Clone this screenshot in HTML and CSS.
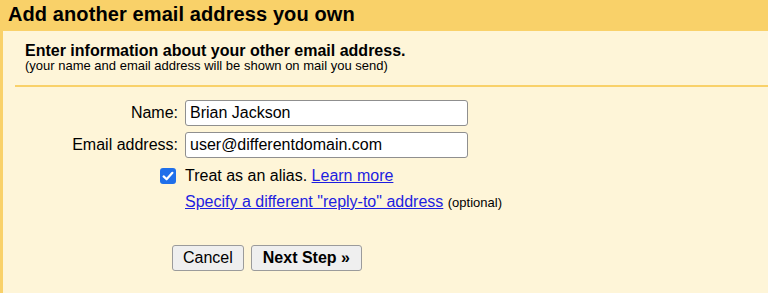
FILE: index.html
```html
<!DOCTYPE html>
<html>
<head>
<meta charset="utf-8">
<link rel="stylesheet" href="styles.css">
</head>
<body>
<div class="header">Add another email address you own</div>
<div class="panel">
  <div class="intro">
    <div class="intro-title">Enter information about your other email address.</div>
    <div class="intro-sub">(your name and email address will be shown on mail you send)</div>
  </div>
  <div class="divider"></div>
  <div class="form">
    <div class="row row-first">
      <label class="label">Name:</label>
      <input class="field" type="text" value="Brian Jackson">
    </div>
    <div class="row row-field">
      <label class="label">Email address:</label>
      <input class="field" type="text" value="user@differentdomain.com">
    </div>
    <div class="row row-check">
      <div class="label label-check">
        <span class="check">
          <svg width="16" height="16" viewBox="0 0 16 16"><rect x="0" y="0" width="16" height="16" rx="3" fill="#1f6fea"/><path d="M3.6 8.4 L6.6 11.3 L12.4 4.8" fill="none" stroke="#fff" stroke-width="2.2" stroke-linecap="round" stroke-linejoin="round"/></svg>
        </span>
      </div>
      <div class="text">Treat as an alias. <a href="#" class="link">Learn more</a></div>
    </div>
    <div class="row row-link">
      <div class="label"></div>
      <div class="text"><a href="#" class="link">Specify a different "reply-to" address</a> <span class="optional">(optional)</span></div>
    </div>
    <div class="buttons">
      <button class="btn">Cancel</button>
      <button class="btn btn-primary">Next Step »</button>
    </div>
  </div>
</div>
</body>
</html>
```
FILE: styles.css
```css
html, body {
  margin: 0;
  padding: 0;
  background: #fef5d8;
  font-family: "Liberation Sans", Arial, sans-serif;
  color: #000;
}
.header {
  background: #f9d169;
  height: 31px;
  line-height: 29px;
  padding-left: 8px;
  font-size: 20px;
  font-weight: bold;
  letter-spacing: 0.1px;
}
.panel {
  border-left: 3px solid #f9d169;
  height: 262px;
  box-sizing: border-box;
}
.intro {
  padding-left: 22px;
  padding-top: 12px;
}
.intro-title {
  font-size: 16px;
  font-weight: bold;
  line-height: 16px;
}
.intro-sub {
  font-size: 13px;
  line-height: 13px;
}
.divider {
  margin-left: 12px;
  margin-top: 13px;
  height: 2px;
  background: #f9d169;
}
.form {
  padding-top: 13px;
}
.row {
  display: flex;
  align-items: center;
  font-size: 16px;
}
.row-field {
  margin-top: 6px;
}
.row-check {
  margin-top: 8px;
  height: 20px;
}
.row-link {
  margin-top: 6px;
  height: 20px;
}
.label {
  width: 175px;
  margin-right: 7px;
  text-align: right;
  flex: none;
  line-height: 20px;
}
.label-check {
  display: flex;
  justify-content: flex-end;
}
.field {
  width: 283px;
  height: 26px;
  box-sizing: border-box;
  border: 1px solid #8f8f8f;
  border-radius: 3px;
  padding: 0 4px;
  font-family: "Liberation Sans", Arial, sans-serif;
  font-size: 16px;
  color: #000;
  background: #fff;
  margin: 0;
  outline: none;
}
.check {
  display: inline-flex;
  margin-right: 2px;
}
.check svg {
  display: block;
}
.text {
  line-height: 20px;
  white-space: nowrap;
}
.link {
  color: #1d1de0;
  text-decoration: underline;
}
.optional {
  font-size: 13px;
}
.buttons {
  margin-top: 33px;
  padding-left: 169px;
  display: flex;
  gap: 7px;
}
.btn {
  height: 26px;
  box-sizing: border-box;
  padding: 0 10px;
  font-family: "Liberation Sans", Arial, sans-serif;
  font-size: 16px;
  color: #000;
  background: #efefef;
  border: 1px solid #9b9b9b;
  border-radius: 3px;
  margin: 0;
}
.btn-primary {
  font-weight: bold;
  padding: 0 11px;
}
```
